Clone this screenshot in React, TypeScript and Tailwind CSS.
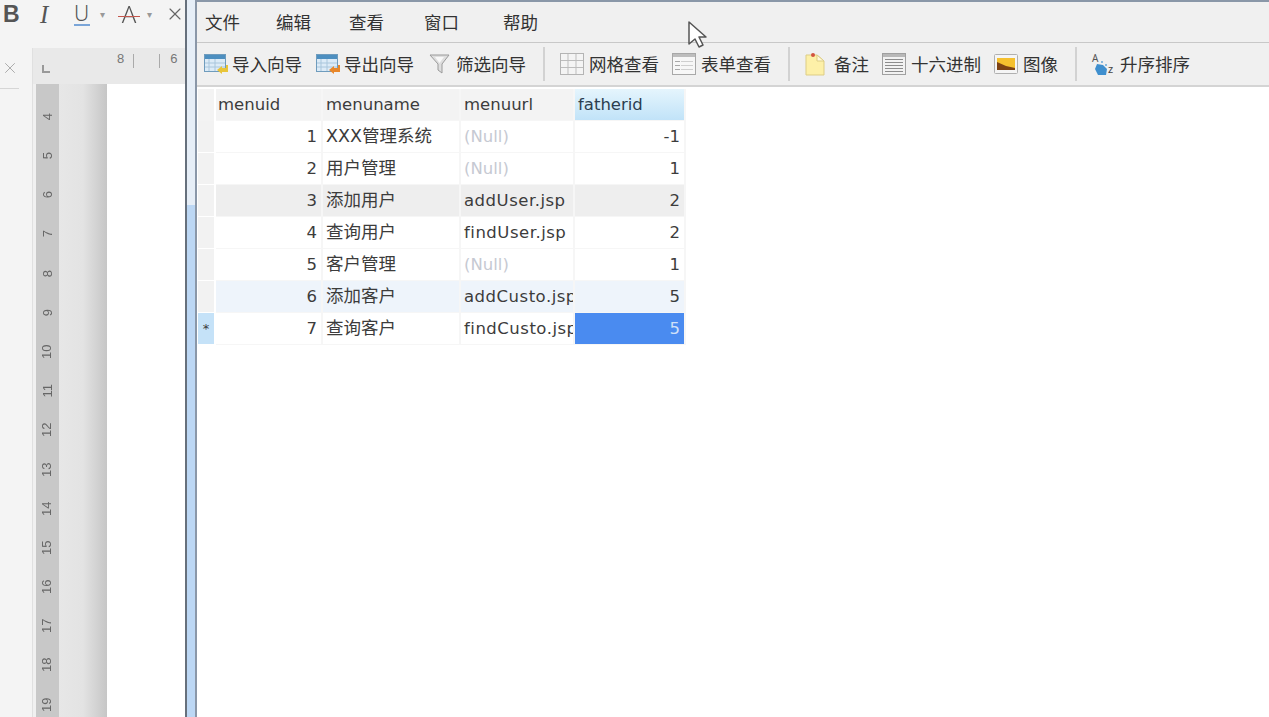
import type { ReactNode } from "react";
import { X } from "lucide-react";

const FONT = "font-['Noto_Sans','Noto_Sans_CJK_SC',sans-serif]";

const RULER = [4, 5, 6, 7, 8, 9, 10, 11, 12, 13, 14, 15, 16, 17, 18, 19];

const ROWS = [
  { id: 1, name: "XXX管理系统", url: null, father: -1 },
  { id: 2, name: "用户管理", url: null, father: 1 },
  { id: 3, name: "添加用户", url: "addUser.jsp", father: 2 },
  { id: 4, name: "查询用户", url: "findUser.jsp", father: 2 },
  { id: 5, name: "客户管理", url: null, father: 1 },
  { id: 6, name: "添加客户", url: "addCusto.jsp", father: 5 },
  { id: 7, name: "查询客户", url: "findCusto.jsp", father: 5 },
];

function WizardIcon({ arrow }: { arrow: string }) {
  return (
    <svg width="24" height="22" viewBox="0 0 24 22">
      <rect x="0.5" y="1.500" width="21" height="17" fill="#dcebf7" stroke="#6f9cbd" />
      <rect x="1" y="2" width="20" height="4" fill="#4d8fc0" />
      <path d="M5 6v12M1 10h20M1 14h20M11 6v12" stroke="#a9c6dc" />
      <path d="M22 12v3h-4v-2l-5 4 5 4v-2h6v-7z" fill={arrow} />
    </svg>
  );
}

function FilterIcon() {
  return (
    <svg width="22" height="22" viewBox="0 0 22 22">
      <path d="M1 2h19l-7 9v9l-4-3v-6z" fill="#dedede" stroke="#9a9a9a" />
      <path d="M6 4h9l-4.500 6z" fill="#f8f8f8" />
    </svg>
  );
}

function GridIcon() {
  return (
    <svg width="24" height="22" viewBox="0 0 24 22">
      <rect x="0.5" y="0.5" width="23" height="21" fill="#f4f4f4" stroke="#b4b4b4" />
      <path d="M8 1v20M16 1v20M1 7.500h22M1 14.500h22" stroke="#bdbdbd" />
    </svg>
  );
}

function FormIcon() {
  return (
    <svg width="24" height="22" viewBox="0 0 24 22">
      <rect x="0.5" y="0.5" width="23" height="21" fill="#f7f7f7" stroke="#a8a8a8" />
      <rect x="1" y="1" width="22" height="3" fill="#bdbdbd" />
      <path d="M3 8.500h5M3 12.500h5M3 16.500h5" stroke="#a8a8a8" />
      <path d="M9 8.500h12M9 12.500h12M9 16.500h12" stroke="#cfcfcf" />
    </svg>
  );
}

function NoteIcon() {
  return (
    <svg width="20" height="24" viewBox="0 0 20 24">
      <path d="M1 3h11l7 6v14H1z" fill="#fdf0a8" stroke="#ddcd85" />
      <path d="M12 3v6h7z" fill="#fff9d8" stroke="#ddcd85" />
      <circle cx="8" cy="3" r="2" fill="#d2533f" />
    </svg>
  );
}

function HexIcon() {
  return (
    <svg width="24" height="22" viewBox="0 0 24 22">
      <rect x="0.5" y="0.5" width="23" height="21" fill="#f2f2f2" stroke="#a0a0a0" />
      <rect x="1" y="1" width="22" height="3" fill="#b8b8b8" />
      <path d="M3 6.500h18M3 9.500h18M3 12.500h18M3 15.500h18M3 18.500h18" stroke="#8c8c8c" />
    </svg>
  );
}

function ImageIcon() {
  return (
    <svg width="24" height="20" viewBox="0 0 24 20">
      <rect x="0.5" y="0.5" width="23" height="19" rx="1" fill="#f5f5f5" stroke="#b0b0b0" />
      <rect x="3" y="4" width="18" height="12" fill="#f5c02e" />
      <path d="M3 8l9 4 9 2v2H3z" fill="#7d4214" />
    </svg>
  );
}

function SortIcon() {
  return (
    <svg width="26" height="26" viewBox="0 0 26 26">
      <text x="1" y="11" fontSize="10" fill="#555" fontFamily="Noto Sans">A</text>
      <path d="M6 13l6 1 4 4-1 6H7l-3-6z" fill="#3f8fce" />
      <circle cx="11" cy="11" r="1" fill="#6aa9d8" />
      <circle cx="15" cy="14" r="1" fill="#6aa9d8" />
      <text x="17" y="22" fontSize="11" fill="#444" fontFamily="Noto Sans">z</text>
    </svg>
  );
}

function ToolItem({ icon, label, w, gap }: { icon: ReactNode; label: string; w: number; gap: string }) {
  return (
    <div className={`flex items-center shrink-0 ${gap}`} style={{ width: w }}>
      {icon}
      <span className="ml-auto whitespace-nowrap">{label}</span>
    </div>
  );
}

function Sep({ className }: { className: string }) {
  return <div className={`w-[2px] h-[34px] bg-[#d2d2d2] shrink-0 ${className}`} />;
}

function LeftPane() {
  return (
    <div className="w-[185px] shrink-0 flex flex-col bg-[#f4f4f4] font-['Liberation_Sans',sans-serif]">
      <div className="h-[48px] flex items-center pb-[20px] text-[#555] shrink-0">
        <span className="ml-[3px] w-[16px] text-[23px] leading-none font-bold">B</span>
        <span className="ml-[21px] w-[13px] text-[25px] leading-none italic font-['Liberation_Serif',serif]">I</span>
        <span className="ml-[21px] w-[17px] text-center text-[21px] leading-[22px] font-['Noto_Sans',sans-serif] font-light border-b-2 border-[#7aa5d8]">U</span>
        <span className="ml-[10px] text-[10px] text-[#999]">▾</span>
        <span className="relative ml-[13px] w-[23px] text-center text-[24px] leading-[28px] font-['Noto_Sans',sans-serif] font-light">
          A
          <span className="absolute left-0 right-0 top-[16px] h-[1px] bg-[#c4574d]" />
        </span>
        <span className="ml-[7px] text-[10px] text-[#999]">▾</span>
        <X className="ml-[13px] shrink-0 text-[#666]" size={20} strokeWidth={1.4} />
      </div>
      <div className="flex-1 flex min-h-0">
        <div className="w-[32px] shrink-0 flex flex-col">
          <div className="h-[41px] w-[19px] border-b border-[#d6d6d6] flex items-center justify-center text-[#aaa]">
            <X size={18} strokeWidth={1.3} />
          </div>
        </div>
        <div className="flex-1 flex flex-col border-l border-[#e0e0e0]">
          <div className="h-[36px] shrink-0 bg-[#e9e9e9] flex items-start text-[#777] text-[13px] pt-[1px]">
            <div className="ml-[9px] mt-[16px] w-[8px] h-[8px] border-l-2 border-b-2 border-[#999]" />
            <span className="ml-[67px]">8</span>
            <div className="ml-[9px] mt-[5px] w-[1px] h-[14px] bg-[#aaa]" />
            <div className="ml-[25px] mt-[5px] w-[1px] h-[14px] bg-[#aaa]" />
            <span className="ml-[10px]">6</span>
          </div>
          <div className="flex-1 flex min-h-0 overflow-hidden">
            <div className="w-[3px] bg-[#f0f0f0] shrink-0" />
            <div className="w-[23px] shrink-0 bg-[#c8c8c8] pt-[13px] flex flex-col text-[#666] text-[13px]">
              {RULER.map((n) => (
                <div key={n} className="h-[39.2px] shrink-0 flex items-center justify-center">
                  <span className="-rotate-90">{n}</span>
                </div>
              ))}
            </div>
            <div className="w-[48px] shrink-0 bg-gradient-to-r from-[#e7e7e7] via-[#e3e3e3] to-[#c6c6c6]" />
            <div className="flex-1 bg-white" />
          </div>
        </div>
      </div>
    </div>
  );
}

function Cell({ children, className = "" }: { children?: ReactNode; className?: string }) {
  return (
    <div className={`overflow-hidden whitespace-nowrap border-r-2 border-b border-[#f6f6f6] leading-[31px] ${className}`}>
      {children}
    </div>
  );
}

function DataGrid() {
  return (
    <div className="grid grid-cols-[18px_107px_138px_114px_111px] w-[488px] ml-[1px] text-[16.500px] text-[#3c3c3c] font-['DejaVu_Sans','Noto_Sans_CJK_SC',sans-serif]">
      <div className="bg-[#f3f3f3] h-[32px] border-r-2 border-white" />
      <Cell className="bg-[#f3f3f3] pl-[2px]">menuid</Cell>
      <Cell className="bg-[#f3f3f3] pl-[3px]">menuname</Cell>
      <Cell className="bg-[#f3f3f3] pl-[3px]">menuurl</Cell>
      <Cell className="bg-gradient-to-b from-[#e5f5fd] to-[#c1e3f8] pl-[3px] text-[#2c3e50]">fatherid</Cell>

      {ROWS.map((r) => {
        const bg = r.id === 3 ? "bg-[#eeeeee]" : r.id === 6 ? "bg-[#eef4fb]" : "bg-white";
        return (
          <div key={r.id} className="contents">
            <div className={`h-[32px] border-b border-r-2 border-white flex items-center justify-center text-[13px] ${r.id === 7 ? "bg-[#c5e2f8]" : "bg-[#f2f2f2]"}`}>
              {r.id === 7 ? "*" : ""}
            </div>
            <Cell className={`${bg} text-right pr-[4px]`}>{r.id}</Cell>
            <Cell className={`${bg} pl-[3px] text-[17.500px]`}>{r.name}</Cell>
            <Cell className={`${bg} pl-[3px] ${r.url ? "tracking-[0.5px]" : "text-[#c6c9d2]"}`}>{r.url ?? "(Null)"}</Cell>
            <Cell className={`text-right pr-[4px] ${r.id === 7 ? "bg-[#4a8bf0] text-[#cfe0f8]" : bg}`}>{r.father}</Cell>
          </div>
        );
      })}
    </div>
  );
}

function NavicatWindow() {
  return (
    <div className="flex-1 min-w-0 flex">
      <div className="w-[10px] shrink-0 flex flex-col border-l-2 border-[#66707c]">
        <div className="h-[205px] bg-[#e6eef7]" />
        <div className="flex-1 bg-[#bcd7f4]" />
      </div>
      <div className="flex-1 min-w-0 flex flex-col border-l-2 border-t-2 border-[#8a97a8] bg-white text-[#333]">
        <div className="h-[41px] shrink-0 bg-[#f0f0f0] border-b border-[#c8c8c8] flex items-center text-[17.500px]">
          <span className="ml-[8px]">文件</span>
          <span className="ml-[36px]">编辑</span>
          <span className="ml-[38px]">查看</span>
          <span className="ml-[40px]">窗口</span>
          <span className="ml-[44px]">帮助</span>
        </div>
        <div className="h-[44px] shrink-0 bg-[#f0f0f0] flex items-center text-[17.500px] border-b-2 border-[#d4d4d4]">
          <ToolItem icon={<WizardIcon arrow="#e8c53a" />} label="导入向导" w={98} gap="ml-[7px]" />
          <ToolItem icon={<WizardIcon arrow="#e8872a" />} label="导出向导" w={98} gap="ml-[14px]" />
          <ToolItem icon={<FilterIcon />} label="筛选向导" w={97} gap="ml-[15px]" />
          <Sep className="ml-[17px]" />
          <ToolItem icon={<GridIcon />} label="网格查看" w={99} gap="ml-[15px]" />
          <ToolItem icon={<FormIcon />} label="表单查看" w={99} gap="ml-[13px]" />
          <Sep className="ml-[17px]" />
          <ToolItem icon={<NoteIcon />} label="备注" w={64} gap="ml-[15px]" />
          <ToolItem icon={<HexIcon />} label="十六进制" w={99} gap="ml-[13px]" />
          <ToolItem icon={<ImageIcon />} label="图像" w={64} gap="ml-[13px]" />
          <Sep className="ml-[17px]" />
          <ToolItem icon={<SortIcon />} label="升序排序" w={99} gap="ml-[14px]" />
        </div>
        <div className="flex-1 bg-white pt-[2px]">
          <DataGrid />
        </div>
      </div>
    </div>
  );
}

export default function App() {
  return (
    <div className={`relative w-[1269px] h-[717px] overflow-hidden flex blur-[0.6px] ${FONT}`}>
      <LeftPane />
      <NavicatWindow />
      <svg className="absolute left-[687px] top-[20px]" width="22" height="30" viewBox="0 0 22 30">
        <path d="M2 2v22l6-5 4 8 4-2-4-8h7z" fill="#fff" stroke="#555" strokeWidth="1.500" strokeLinejoin="round" />
      </svg>
    </div>
  );
}
